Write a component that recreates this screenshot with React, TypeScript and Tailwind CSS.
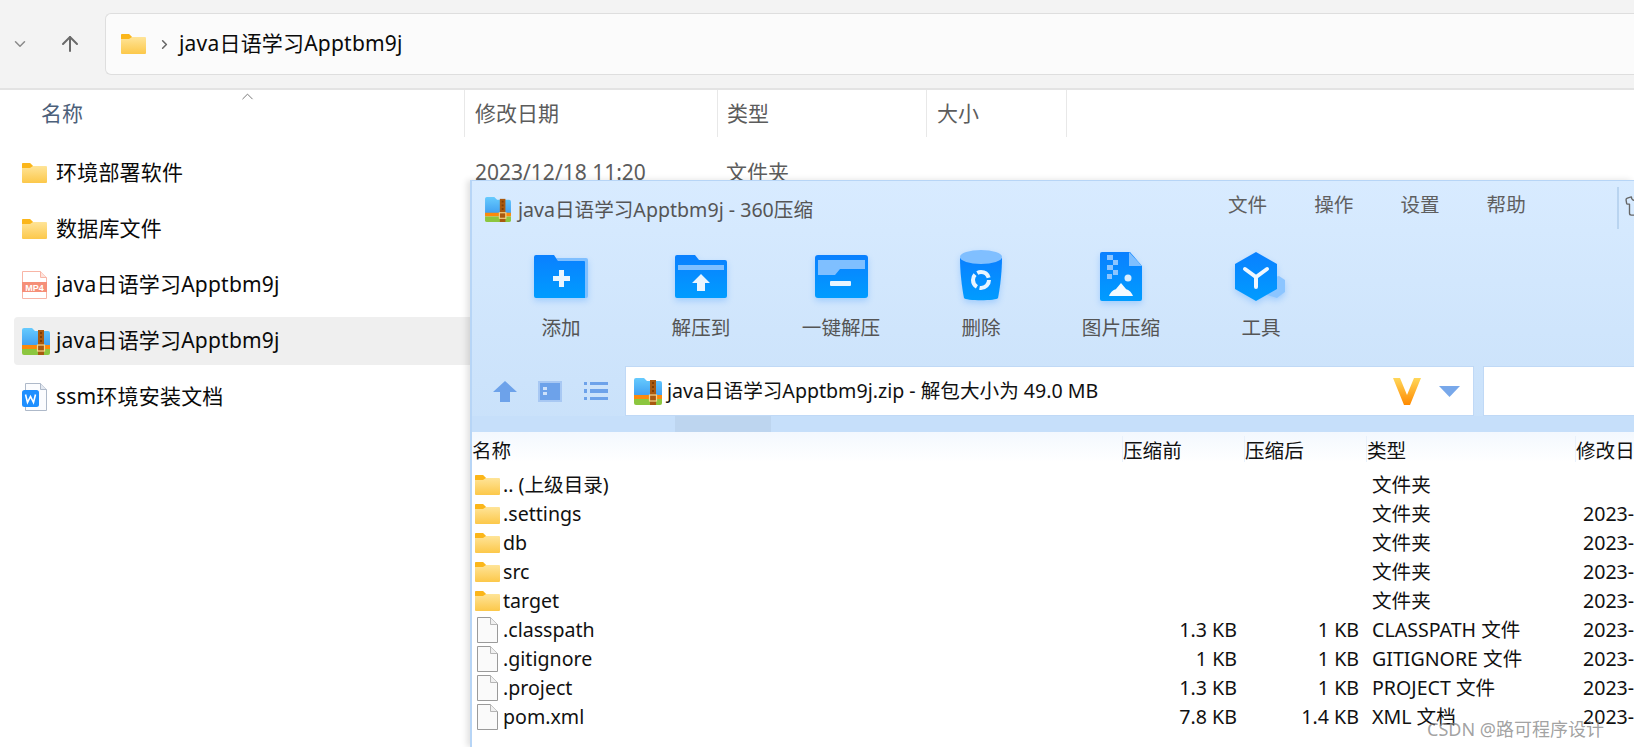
import { useId } from "react";
import { ArrowUp, ChevronDown, ChevronRight, ChevronUp, Shirt } from "lucide-react";

const font = "font-['Noto_Sans','Noto_Sans_CJK_SC',sans-serif]";

function FolderIcon({ className }: { className: string }) {
  const id = useId();
  return (
    <svg viewBox="0 0 25 20" className={className}>
      <defs>
        <linearGradient id={id} x1="0" y1="0" x2="0" y2="1">
          <stop offset="0" stopColor="#ffe9a6" />
          <stop offset="1" stopColor="#fcc84a" />
        </linearGradient>
      </defs>
      <path d="M0 1a1 1 0 0 1 1-1h7l3 3h13a1 1 0 0 1 1 1v15a1 1 0 0 1-1 1H1a1 1 0 0 1-1-1z" fill={`url(#${id})`} />
      <path d="M0 1a1 1 0 0 1 1-1h7l3 3-3 2H0z" fill="#fbb61a" />
    </svg>
  );
}

function ZipIcon({ className }: { className: string }) {
  const id = useId();
  return (
    <svg viewBox="0 0 28 27" className={className}>
      <defs>
        <linearGradient id={id} x1="0" y1="0" x2="0" y2="1">
          <stop offset="0" stopColor="#66cbfe" />
          <stop offset="1" stopColor="#3d9cf0" />
        </linearGradient>
      </defs>
      <path d="M0 2a2 2 0 0 1 2-2h8l3 3h13a2 2 0 0 1 2 2v14H0z" fill={`url(#${id})`} />
      <rect x="0" y="17" width="28" height="4" fill="#fb8a0c" />
      <path d="M0 21h28v4a2 2 0 0 1-2 2H2a2 2 0 0 1-2-2z" fill="#8cc63f" />
      <rect x="16" y="2" width="6" height="25" fill="#a9590f" />
      <path d="M18 4h2v2h-2zM18 8h2v2h-2zM18 12h2v2h-2z" fill="#7c3d06" />
      <rect x="15.5" y="17" width="7" height="6" fill="none" stroke="#f6d58a" strokeWidth="1.2" />
    </svg>
  );
}

function Mp4Icon({ className }: { className: string }) {
  return (
    <svg viewBox="0 0 25 28" className={className}>
      <path d="M.5.5h18l6 6v21H.5z" fill="#fff" stroke="#f8b5a6" />
      <path d="M18.5.5v6h6" fill="#fde4dd" stroke="#f8b5a6" />
      <rect x="0" y="11" width="25" height="10" fill="#f58f78" />
      <text x="12.5" y="19.5" textAnchor="middle" fontSize="9" fontWeight="700" fill="#fff" fontFamily="Liberation Sans">MP4</text>
    </svg>
  );
}

function WordIcon({ className }: { className: string }) {
  return (
    <svg viewBox="0 0 25 28" className={className}>
      <path d="M3.5.5h15l6 6v21h-21z" fill="#fbfcfe" stroke="#aeb9c9" />
      <path d="M18.5.5v6h6" fill="#e3e8f0" stroke="#aeb9c9" />
      <rect x="0" y="7" width="17" height="17" rx="2.5" fill="#1e8fff" />
      <path d="M3.5 11.5l2 8 3-6 3 6 2-8" fill="none" stroke="#fff" strokeWidth="1.6" />
    </svg>
  );
}

function PlainFileIcon() {
  return (
    <svg viewBox="0 0 21 26" className="h-[26px] w-[21px]">
      <path d="M.5.5h13l7 7v18H.5z" fill="#fafafa" stroke="#9a9a9a" />
      <path d="M13.5.5v7h7" fill="#f0f0f0" stroke="#b5b5b5" />
    </svg>
  );
}

function BlueGrad({ id }: { id: string }) {
  return (
    <defs>
      <linearGradient id={id} x1="0" y1="0" x2="0" y2="1">
        <stop offset="0" stopColor="#0a80ff" />
        <stop offset="1" stopColor="#009cff" />
      </linearGradient>
    </defs>
  );
}

const iconShadow = "drop-shadow-[0_3px_3px_rgba(0,120,255,0.22)]";

function AddIcon() {
  const id = useId();
  return (
    <svg viewBox="0 0 54 43" className={`h-[43px] w-[54px] ${iconShadow}`}>
      <BlueGrad id={id} />
      <path d="M22 3h30a2 2 0 0 1 2 2v36a2 2 0 0 1-2 2h-4z" fill="#7fbfff" />
      <path d="M0 2a2 2 0 0 1 2-2h18l4 6h26a1 1 0 0 1 1 1v36H2a2 2 0 0 1-2-2z" fill={`url(#${id})`} />
      <path d="M22 20h6v-6h5v6h6v5h-6v6h-5v-6h-6z" transform="translate(-3 1)" fill="#e9f5ff" />
    </svg>
  );
}

function ExtractToIcon() {
  const id = useId();
  return (
    <svg viewBox="0 0 52 43" className={`h-[43px] w-[52px] ${iconShadow}`}>
      <BlueGrad id={id} />
      <path d="M0 2a2 2 0 0 1 2-2h18l4 5h26a2 2 0 0 1 2 2v34a2 2 0 0 1-2 2H2a2 2 0 0 1-2-2z" fill={`url(#${id})`} />
      <path d="M3 10h46v5H3z" fill="#7fbfff" />
      <path d="M26 19l9 9h-5v8h-8v-8h-5z" fill="#e9f5ff" />
    </svg>
  );
}

function OneClickIcon() {
  const id = useId();
  return (
    <svg viewBox="0 0 53 43" className={`h-[43px] w-[53px] ${iconShadow}`}>
      <BlueGrad id={id} />
      <rect x="0" y="0" width="53" height="43" rx="3" fill={`url(#${id})`} />
      <path d="M3 5h47v9H25l-5 6H3z" fill="#7fbfff" />
      <rect x="15" y="26" width="21" height="5" rx="1" fill="#e9f5ff" />
    </svg>
  );
}

function TrashIcon() {
  const id = useId();
  return (
    <svg viewBox="0 0 42 52" className={`h-[52px] w-[42px] ${iconShadow}`}>
      <BlueGrad id={id} />
      <path d="M0 8c0 14 2 30 4 40 1 3 33 3 34 0 2-10 4-26 4-40z" fill={`url(#${id})`} />
      <ellipse cx="21" cy="7" rx="21" ry="7" fill="#80bfff" />
      <circle cx="21" cy="30" r="8" fill="none" stroke="#e9f5ff" strokeWidth="4" strokeDasharray="14 2.8" />
    </svg>
  );
}

function ImageZipIcon() {
  const id = useId();
  return (
    <svg viewBox="0 0 42 49" className={`h-[49px] w-[42px] ${iconShadow}`}>
      <BlueGrad id={id} />
      <path d="M0 2a2 2 0 0 1 2-2h28l12 14v33a2 2 0 0 1-2 2H2a2 2 0 0 1-2-2z" fill={`url(#${id})`} />
      <path d="M29 0l13 14H29z" fill="#7fbfff" />
      <path d="M7 3h6v5H7zM13 8h5v5h-5zM7 13h6v5H7zM13 18h5v5h-5zM7 22h5v5H7z" fill="#8cc5ff" />
      <circle cx="28" cy="26" r="3.5" fill="#d8edff" />
      <path d="M9 44c2-5 5-6 7-7l5-6 5 6c2 1 5 2 7 7z" fill="#f4faff" />
    </svg>
  );
}

function ToolIcon() {
  const id = useId();
  return (
    <svg viewBox="0 0 52 49" className={`h-[49px] w-[52px] ${iconShadow}`}>
      <BlueGrad id={id} />
      <path d="M36 26l8-2 6 4v12l-8 6-10-3z" fill="#8cc5ff" />
      <path d="M21 0l21 12v25L21 49 0 37V12z" fill={`url(#${id})`} />
      <path d="M10 17l11 8 11-8M21 25v10" fill="none" stroke="#f0f8ff" strokeWidth="4" strokeLinecap="round" />
    </svg>
  );
}

const explorerRows = [
  { name: "环境部署软件", icon: <FolderIcon className="h-[20px] w-[25px]" /> },
  { name: "数据库文件", icon: <FolderIcon className="h-[20px] w-[25px]" /> },
  { name: "java日语学习Apptbm9j", icon: <Mp4Icon className="h-[28px] w-[25px]" /> },
  { name: "java日语学习Apptbm9j", icon: <ZipIcon className="h-[27px] w-[28px]" />, selected: true },
  { name: "ssm环境安装文档", icon: <WordIcon className="h-[28px] w-[25px]" /> },
];

const tools = [
  { label: "添加", icon: <AddIcon /> },
  { label: "解压到", icon: <ExtractToIcon /> },
  { label: "一键解压", icon: <OneClickIcon /> },
  { label: "删除", icon: <TrashIcon /> },
  { label: "图片压缩", icon: <ImageZipIcon /> },
  { label: "工具", icon: <ToolIcon /> },
];

const archiveRows = [
  { name: ".. (上级目录)", type: "文件夹", folder: true },
  { name: ".settings", type: "文件夹", folder: true, date: "2023-" },
  { name: "db", type: "文件夹", folder: true, date: "2023-" },
  { name: "src", type: "文件夹", folder: true, date: "2023-" },
  { name: "target", type: "文件夹", folder: true, date: "2023-" },
  { name: ".classpath", before: "1.3 KB", after: "1 KB", type: "CLASSPATH 文件", date: "2023-" },
  { name: ".gitignore", before: "1 KB", after: "1 KB", type: "GITIGNORE 文件", date: "2023-" },
  { name: ".project", before: "1.3 KB", after: "1 KB", type: "PROJECT 文件", date: "2023-" },
  { name: "pom.xml", before: "7.8 KB", after: "1.4 KB", type: "XML 文档", date: "2023-" },
];

function Explorer() {
  return (
    <div className="flex flex-col">
      <div className="flex h-[90px] items-center border-b-2 border-[#e3e3e3] bg-[#f3f3f3]">
        <ChevronDown className="ml-[11px] size-[18px] text-[#8a8a8a]" strokeWidth={2} />
        <ArrowUp className="ml-[29px] size-[24px] text-[#6a6a6a]" strokeWidth={2} />
        <div className="ml-[23px] flex h-[62px] flex-1 items-center rounded-l-md border border-r-0 border-[#dedede] bg-[#fbfbfb] pl-[15px]">
          <FolderIcon className="h-[20px] w-[25px]" />
          <ChevronRight className="ml-[11px] size-[15px] text-[#666]" strokeWidth={2.5} />
          <span className="ml-[7px] text-[21px] tracking-[0.2px] text-[#0a0a0a]">java日语学习Apptbm9j</span>
        </div>
      </div>
      <div className="relative flex h-[47px] text-[21px] text-[#4c607a]">
        <ChevronUp className="absolute left-[238px] top-[-3px] size-[19px] text-[#777]" strokeWidth={1.25} />
        <div className="flex w-[465px] shrink-0 items-center border-r border-[#e8e8e8] pl-[41px]">名称</div>
        <div className="flex w-[253px] shrink-0 items-center border-r border-[#e8e8e8] pl-[10px] text-[#5c5c5c]">修改日期</div>
        <div className="flex w-[209px] shrink-0 items-center border-r border-[#e8e8e8] pl-[9px] text-[#5c5c5c]">类型</div>
        <div className="flex w-[140px] shrink-0 items-center border-r border-[#e8e8e8] pl-[10px] text-[#5c5c5c]">大小</div>
      </div>
      <div className="mt-[12px] flex flex-col gap-[8px]">
        {explorerRows.map((row, i) => (
          <div
            key={i}
            className={`ml-[14px] flex h-[48px] items-center rounded-l pl-[6px] ${row.selected ? "bg-[#efefef]" : ""}`}
          >
            <div className="flex w-[36px] shrink-0 items-center justify-start pl-[2px]">{row.icon}</div>
            <span className="w-[419px] shrink-0 text-[21px] tracking-[0.2px] text-[#0a0a0a]">{row.name}</span>
            {i === 0 && (
              <>
                <span className="w-[251px] shrink-0 text-[21px] text-[#5c5c5c]">2023/12/18 11:20</span>
                <span className="text-[21px] text-[#5c5c5c]">文件夹</span>
              </>
            )}
          </div>
        ))}
      </div>
    </div>
  );
}

function ArchiveWindow() {
  return (
    <div className="absolute left-[470px] top-[180px] h-[567px] w-[1164px] overflow-hidden whitespace-nowrap border-l-2 border-t border-[#b7d5f6] bg-white text-[19.6px] shadow-[-3px_0_6px_rgba(0,0,0,0.12)]">
      <div className="flex h-[251px] flex-col bg-gradient-to-b from-[#d8ebff] to-[#c9e1fa]">
        <div className="flex h-[60px] shrink-0 pt-[6px]">
          <div className="flex h-[42px] w-[756px] shrink-0 items-center pl-[12px] text-[#555]">
            <ZipIcon className="mt-[2px] h-[25px] w-[28px]" />
            <span className="ml-[6px] mt-[4px]">java日语学习Apptbm9j - 360压缩</span>
          </div>
          <div className="flex h-[36px] shrink-0 items-center gap-[47px] text-[#5f5f5f]">
            <span>文件</span>
            <span>操作</span>
            <span>设置</span>
            <span>帮助</span>
          </div>
          <div className="ml-[91px] h-[42px] w-[2px] shrink-0 bg-[#b9d4f0]" />
          <Shirt className="ml-[5px] mt-[8px] size-[22px] shrink-0 text-[#666]" strokeWidth={1.5} />
        </div>
        <div className="ml-[19px] flex shrink-0 pt-[9px]">
          {tools.map((t) => (
            <div key={t.label} className="flex w-[140px] flex-col items-center">
              <div className="flex h-[52px] items-center">{t.icon}</div>
              <span className="mt-[11px] text-[#555]">{t.label}</span>
            </div>
          ))}
        </div>
        <div className="mt-[24px] flex h-[50px] shrink-0 items-center">
          <svg viewBox="0 0 24 21" className="ml-[21px] h-[21px] w-[24px]">
            <path d="M12 0l12 11h-7v10H7V11H0z" fill="#6da2ea" />
          </svg>
          <svg viewBox="0 0 24 21" className="ml-[21px] h-[21px] w-[24px]">
            <rect x="0" y="0" width="24" height="21" fill="#a8c8f3" />
            <rect x="2" y="2" width="20" height="17" fill="#6da2ea" />
            <path d="M5 6h4v3H5zM5 11h4v3H5z" fill="#cfe2fa" />
          </svg>
          <svg viewBox="0 0 24 18" className="ml-[22px] h-[18px] w-[24px]">
            <path d="M0 0h3v3H0zM6 0h18v3H6zM0 7h3v4H0zM6 7h18v4H6zM0 15h3v3H0zM6 15h18v3H6z" fill="#6da2ea" />
          </svg>
          <div className="ml-[17px] flex h-[50px] w-[849px] shrink-0 items-center border border-[#c0d9f6] bg-white pl-[8px]">
            <ZipIcon className="h-[27px] w-[28px]" />
            <span className="mb-[2px] ml-[5px] text-[#111]">java日语学习Apptbm9j.zip - 解包大小为 49.0 MB</span>
            <svg viewBox="0 0 28 27" className="ml-auto h-[27px] w-[28px]">
              <defs>
                <linearGradient id="vmark" x1="0" y1="0" x2="0" y2="1">
                  <stop offset="0" stopColor="#ffd75a" />
                  <stop offset="1" stopColor="#ff8a00" />
                </linearGradient>
              </defs>
              <path d="M0 0h7l7 17 7-17h7L17 27h-6z" fill="url(#vmark)" />
            </svg>
            <svg viewBox="0 0 21 11" className="ml-[18px] mr-[13px] h-[11px] w-[21px]">
              <path d="M0 0h21L10.5 11z" fill="#78a8ea" />
            </svg>
          </div>
          <div className="ml-[9px] h-[50px] flex-1 border border-r-0 border-[#c0d9f6] bg-white" />
        </div>
        <div className="h-[16px] shrink-0 bg-[#c6dffa]">
          <div className="ml-[203px] h-full w-[96px] bg-[#bdd5ef]" />
        </div>
      </div>
      <div className="flex h-[30px] bg-gradient-to-b from-[#f3f8fe] to-white pt-[4px] text-[#111]">
        <div className="h-[26px] w-[651px] shrink-0 border-r border-[#e9f1fb]">名称</div>
        <div className="h-[26px] w-[122px] shrink-0 border-r border-[#e9f1fb]">压缩前</div>
        <div className="h-[26px] w-[122px] shrink-0 border-r border-[#e9f1fb]">压缩后</div>
        <div className="h-[26px] w-[209px] shrink-0 border-r border-[#e9f1fb]">类型</div>
        <div className="h-[26px] shrink-0">修改日期</div>
      </div>
      <div className="mt-[8px] flex flex-col text-[#111]">
        {archiveRows.map((row) => (
          <div key={row.name} className="flex h-[29px] items-center">
            <div className="flex w-[31px] shrink-0 justify-center">
              {row.folder ? <FolderIcon className="h-[20px] w-[25px]" /> : <PlainFileIcon />}
            </div>
            <span className="w-[620px] shrink-0">{row.name}</span>
            <span className="w-[122px] shrink-0 pr-[8px] text-right">{row.before}</span>
            <span className="w-[122px] shrink-0 pr-[8px] text-right">{row.after}</span>
            <span className="w-[209px] shrink-0 pl-[5px]">{row.type}</span>
            <span className="pl-[7px]">{row.date}</span>
          </div>
        ))}
      </div>
    </div>
  );
}

export default function App() {
  return (
    <div className={`relative h-[747px] w-[1634px] overflow-hidden bg-white ${font}`}>
      <Explorer />
      <ArchiveWindow />
      <span className="absolute left-[1427px] top-[716px] text-[18px] text-[#8a8a8a]/80">CSDN @路可程序设计</span>
    </div>
  );
}
